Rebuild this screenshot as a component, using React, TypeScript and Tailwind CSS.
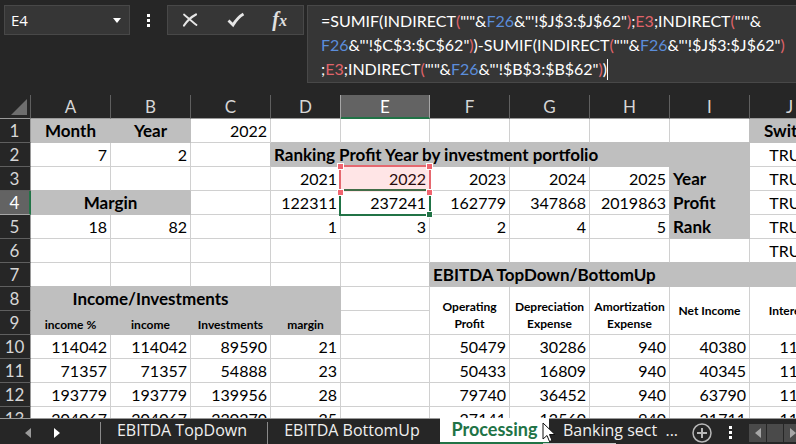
import { Fragment } from "react";

type Cell = {
  text?: string;
  fill?: boolean;
  kind?: "num" | "label" | "title" | "small" | "wrapped" | "center";
  colSpan?: number;
  rowSpan?: number;
  mark?: "ref" | "active";
};

const COLUMNS = ["A", "B", "C", "D", "E", "F", "G", "H", "I", "J"];

const n = (text: string): Cell => ({ text, kind: "num" });
const g = (text: string, kind: Cell["kind"]): Cell => ({ text, kind, fill: true });

const ROWS: Record<string, Cell>[] = [
  { A: g("Month", "title"), B: g("Year", "title"), C: n("2022"), J: g("Switch", "title") },
  {
    A: n("7"), B: n("2"),
    D: { text: "Ranking Profit Year by investment portfolio", kind: "label", fill: true, colSpan: 6 },
    J: { text: "TRUE", kind: "center" },
  },
  {
    D: n("2021"), E: { text: "2022", kind: "num", mark: "ref" }, F: n("2023"), G: n("2024"), H: n("2025"),
    I: g("Year", "label"), J: { text: "TRUE", kind: "center" },
  },
  {
    A: { text: "Margin", kind: "title", fill: true, colSpan: 2 },
    D: n("122311"), E: { text: "237241", kind: "num", mark: "active" }, F: n("162779"), G: n("347868"), H: n("2019863"),
    I: g("Profit", "label"), J: { text: "TRUE", kind: "center" },
  },
  {
    A: n("18"), B: n("82"), D: n("1"), E: n("3"), F: n("2"), G: n("4"), H: n("5"),
    I: g("Rank", "label"), J: { text: "TRUE", kind: "center" },
  },
  { J: { text: "TRUE", kind: "center" } },
  { F: { text: "EBITDA TopDown/BottomUp", kind: "label", fill: true, colSpan: 5 } },
  {
    A: { text: "Income/Investments", kind: "title", fill: true, colSpan: 3 },
    D: { fill: true },
    F: { text: "Operating Profit", kind: "wrapped", rowSpan: 2 },
    G: { text: "Depreciation Expense", kind: "wrapped", rowSpan: 2 },
    H: { text: "Amortization Expense", kind: "wrapped", rowSpan: 2 },
    I: { text: "Net Income", kind: "small", rowSpan: 2 },
    J: { text: "Interest", kind: "small", rowSpan: 2 },
  },
  { A: g("income %", "small"), B: g("income", "small"), C: g("Investments", "small"), D: g("margin", "small") },
  { A: n("114042"), B: n("114042"), C: n("89590"), D: n("21"), F: n("50479"), G: n("30286"), H: n("940"), I: n("40380"), J: n("11640") },
  { A: n("71357"), B: n("71357"), C: n("54888"), D: n("23"), F: n("50433"), G: n("16809"), H: n("940"), I: n("40345"), J: n("11640") },
  { A: n("193779"), B: n("193779"), C: n("139956"), D: n("28"), F: n("79740"), G: n("36452"), H: n("940"), I: n("63790"), J: n("11640") },
  { A: n("204067"), B: n("204067"), C: n("220270"), D: n("25"), F: n("27141"), G: n("12560"), H: n("940"), I: n("21711"), J: n("11640") },
];

// Resolve merged ranges so every address knows which cell owns it.
const owner: (Cell | undefined)[][] = ROWS.map(() => COLUMNS.map(() => undefined));
const covered: boolean[][] = ROWS.map(() => COLUMNS.map(() => false));
ROWS.forEach((row, r) =>
  COLUMNS.forEach((name, c) => {
    const cell = row[name];
    if (!cell) return;
    for (let y = r; y < r + (cell.rowSpan ?? 1); y++)
      for (let x = c; x < c + (cell.colSpan ?? 1); x++) {
        owner[y][x] = cell;
        covered[y][x] = y !== r || x !== c;
      }
  }),
);

const isFilled = (r: number, c: number) => Boolean(owner[r]?.[c]?.fill);

const KIND = {
  num: "pr-[3px] text-right text-base leading-5",
  label: "pl-[3px] text-left text-[17px] leading-5 font-bold",
  title: "text-center text-[17px] leading-5 font-bold",
  small: "text-center text-xs leading-[17px] font-bold",
  wrapped: "pt-2 text-center text-xs leading-[17px] font-bold",
  center: "text-center text-base leading-5",
};

function Handle({ at }: { at: string }) {
  return <span className={`absolute size-[7px] border border-white bg-[#f0646e] ${at}`} />;
}

function Mark({ type }: { type: "ref" | "active" }) {
  if (type === "ref")
    return (
      <span className="pointer-events-none absolute -inset-0.5 z-20 border-2 border-b-0 border-[#e5686f] bg-[#ff505a]/15">
        <Handle at="-left-1 -top-1" />
        <Handle at="-right-1 -top-1" />
        <Handle at="-bottom-1 -left-1" />
        <Handle at="-bottom-1 -right-1" />
      </span>
    );
  return (
    <span className="pointer-events-none absolute -inset-0.5 z-10 border-2 border-[#217346]">
      <span className="absolute -bottom-1 -right-1 size-[7px] border border-white bg-[#217346]" />
    </span>
  );
}

function Sheet() {
  return (
    <table className="w-full min-w-[830px] table-fixed border-separate border-spacing-0 bg-white text-black">
      <colgroup>
        <col className="w-[31px]" />
        <col className="w-[80px]" />
        <col className="w-[80px]" />
        <col className="w-[80px]" />
        <col className="w-[70px]" />
        <col className="w-[89px]" />
        <col className="w-[80px]" />
        <col className="w-[80px]" />
        <col className="w-[80px]" />
        <col className="w-[80px]" />
        <col />
      </colgroup>
      <thead>
        <tr className="h-6 bg-[#262626] text-[#d6d6d6]">
          <td className="border-b border-r border-b-[#9a9a9a] border-r-[#5f5f5f] p-0">
            <button aria-label="Select all" className="ml-[11px] block">
              <svg width="16" height="16" viewBox="0 0 16 16" className="block">
                <path d="M16 0v16H0z" fill="#6e6e6e" />
              </svg>
            </button>
          </td>
          {COLUMNS.map((name) => (
            <th
              key={name}
              scope="col"
              className={
                name === "E"
                  ? "border-b-2 border-r border-b-[#217346] border-r-[#a6a6a6] bg-[#636363] p-0 pt-0.5 text-[17px] leading-5 font-normal text-white"
                  : name === "D"
                    ? "border-b border-r border-b-[#9a9a9a] border-r-[#a6a6a6] p-0 pt-px text-[17px] leading-5 font-normal"
                    : "border-b border-r border-b-[#9a9a9a] border-r-[#5f5f5f] p-0 pt-px text-[17px] leading-5 font-normal"
              }
            >
              {name}
            </th>
          ))}
        </tr>
      </thead>
      <tbody>
        {ROWS.map((_, r) => (
          <tr key={r} className="h-6">
            <th
              scope="row"
              className={
                r === 3
                  ? "border-b border-r-2 border-b-[#a6a6a6] border-r-[#217346] bg-[#636363] p-0 text-[17px] leading-5 font-normal text-white"
                  : "border-b border-r border-b-[#5f5f5f] border-r-[#9a9a9a] bg-[#262626] p-0 pr-px text-[17px] leading-5 font-normal text-[#d6d6d6]"
              }
            >
              {r + 1}
            </th>
            {COLUMNS.map((name, c) => {
              if (covered[r][c]) return <Fragment key={name} />;
              const cell = owner[r][c];
              const lastRow = r + (cell?.rowSpan ?? 1) - 1;
              const lastCol = c + (cell?.colSpan ?? 1) - 1;
              const right = cell?.fill || isFilled(r, lastCol + 1) ? "border-r-[#bfbfbf]" : "border-r-[#d0d0d0]";
              const bottom = cell?.fill || isFilled(lastRow + 1, c) ? "border-b-[#bfbfbf]" : "border-b-[#d0d0d0]";
              const wrap = cell?.kind === "wrapped" ? "whitespace-normal" : "whitespace-nowrap";
              return (
                <td
                  key={name}
                  colSpan={cell?.colSpan}
                  rowSpan={cell?.rowSpan}
                  className={`relative border-b border-r p-0 ${wrap} ${right} ${bottom} ${cell?.fill ? "bg-[#bfbfbf]" : ""} ${cell?.kind ? KIND[cell.kind] : ""} ${cell?.kind === "small" && cell.fill ? "pt-1" : ""}`}
                >
                  {cell?.text}
                  {cell?.mark && <Mark type={cell.mark} />}
                </td>
              );
            })}
          </tr>
        ))}
      </tbody>
    </table>
  );
}

const B = ({ children }: { children: string }) => <span className="text-[#5b8ddb]">{children}</span>;
const R = ({ children }: { children: string }) => <span className="text-[#e0646a]">{children}</span>;

function FormulaBar() {
  return (
    <header className="flex h-[95px] shrink-0 items-start pl-1 pt-[5px]">
      <div className="flex h-[30px] w-[126px] items-center border border-[#484848] bg-[#363636]">
        <input
          aria-label="Name box"
          defaultValue="E4"
          className="w-full min-w-0 flex-1 bg-transparent pl-[6px] font-['Open_Sans',sans-serif] text-[15px] text-white outline-none"
        />
        <button aria-label="Open name list" className="pr-2">
          <svg width="8" height="5" viewBox="0 0 8 5" className="block">
            <path d="M0 0h8L4 5z" fill="#fff" />
          </svg>
        </button>
      </div>
      <div className="flex h-[30px] w-[37px] flex-col items-center justify-center gap-[2px]">
        <span className="size-[3px] bg-white" />
        <span className="size-[3px] bg-white" />
        <span className="size-[3px] bg-white" />
      </div>
      <div className="flex h-[30px] w-[137px] items-center justify-between border border-[#484848] bg-[#363636] pl-[13px] pr-4">
        <button aria-label="Cancel">
          <svg width="18" height="16" viewBox="0 0 18 16" className="block" fill="none" stroke="#e6e6e6" strokeLinecap="round">
            <path d="M3 2.500C6 5 11 9.500 15.500 13" strokeWidth="1.800" />
            <path d="M15 2.500C10 5 6 9 3 13.500" strokeWidth="2.200" />
          </svg>
        </button>
        <button aria-label="Enter">
          <svg width="18" height="16" viewBox="0 0 18 16" className="block" fill="none" stroke="#e6e6e6">
            <path d="M1.500 8.500L6 13C9 8 12 4.500 16.500 2" strokeWidth="2.800" />
          </svg>
        </button>
        <button
          aria-label="Insert function"
          className="font-['Liberation_Serif',serif] text-xl leading-6 font-bold italic text-[#e0e0e0]"
        >
          f<span className="text-base">x</span>
        </button>
      </div>
      <div
        role="textbox"
        aria-label="Formula"
        aria-multiline="true"
        tabIndex={0}
        className="ml-[3px] h-[78px] flex-1 overflow-hidden whitespace-nowrap border border-r-0 border-[#484848] bg-[#363636] pl-[13px] pt-[3px] text-base leading-6 text-white outline-none"
      >
        <div>
          =SUMIF(INDIRECT<R>(</R>"'"&amp;<B>F26</B>&amp;"'!$J$3:$J$62"<R>)</R>;<R>E3</R>;INDIRECT<R>(</R>"'"&amp;
        </div>
        <div>
          <B>F26</B>&amp;"'!$C$3:$C$62"<R>)</R>)-SUMIF(INDIRECT<R>(</R>"'"&amp;<B>F26</B>&amp;"'!$J$3:$J$62"<R>)</R>
        </div>
        <div className="flex items-center">
          ;<R>E3</R>;INDIRECT<R>(</R>"'"&amp;<B>F26</B>&amp;"'!$B$3:$B$62"<R>)</R>)
          <span className="h-[21px] w-px bg-white" />
        </div>
      </div>
    </header>
  );
}

function Arrow({ left, color }: { left?: boolean; color: string }) {
  return (
    <svg width="6" height="10" viewBox="0 0 6 10" className="block">
      <path d={left ? "M6 0v10L0 5z" : "M0 0v10l6-5z"} fill={color} />
    </svg>
  );
}

function TabBar() {
  return (
    <nav
      aria-label="Sheets"
      className="relative flex h-[26px] shrink-0 items-stretch border-t border-[#9a9a9a] bg-[#262626] font-['Open_Sans',sans-serif] text-base leading-5 text-[#f0f0f0]"
    >
      <div className="flex w-[100px] items-center gap-[23px] pl-[25px] pt-[3px]">
        <button aria-label="Previous sheet"><Arrow left color="#9a9a9a" /></button>
        <button aria-label="Next sheet"><Arrow color="#ffffff" /></button>
      </div>
      <span className="mt-[3px] w-px bg-[#8a8a8a]" />
      <button className="w-[166px] pb-1 pr-1">EBITDA TopDown</button>
      <span className="mt-[3px] w-px bg-[#8a8a8a]" />
      <button className="w-[172px] pb-1 pr-1">EBITDA BottomUp</button>
      <button
        aria-current="page"
        className="-mt-px w-[109px] border-b-2 border-[#217346] bg-white pb-0.5 font-['Lato',sans-serif] text-lg leading-5 font-bold text-[#217346]"
      >
        Processing
      </button>
      <button className="flex-1 whitespace-nowrap pb-1 pl-[14px] text-left">Banking sect&nbsp; ...</button>
      <div className="flex items-center pt-[2px]">
        <button aria-label="New sheet">
          <svg width="20" height="20" viewBox="0 0 20 20" className="block" fill="none" stroke="#b8b8b8" strokeWidth="1.500">
            <circle cx="10" cy="10" r="9" />
            <path d="M10 5v10M5 10h10" strokeWidth="2" />
          </svg>
        </button>
        <div className="flex w-[37px] flex-col items-center gap-[2px]">
          <span className="size-[3px] bg-white" />
          <span className="size-[3px] bg-white" />
          <span className="size-[3px] bg-white" />
        </div>
        <div className="flex h-[18px] gap-px">
          <button aria-label="Scroll left" className="flex w-[17px] items-center justify-center bg-[#4a4a4a]">
            <Arrow left color="#a6a6a6" />
          </button>
          <span className="w-4 bg-[#4a4a4a]" />
          <button aria-label="Scroll right" className="flex w-3 items-center justify-end bg-[#4a4a4a]">
            <Arrow color="#a6a6a6" />
          </button>
        </div>
      </div>
      <span className="pointer-events-none absolute bottom-0 left-[543px] h-px w-[73px] bg-[#c8c8c8]" />
      <svg width="14" height="21" viewBox="0 0 14 21" className="pointer-events-none absolute left-[542px] top-[3px]">
        <path d="M1 1v16l4-3.500 2.500 6 2.500-1-2.500-6H13z" fill="#fff" stroke="#111" />
      </svg>
    </nav>
  );
}

export default function App() {
  return (
    <div className="flex h-screen flex-col overflow-hidden bg-[#262626] font-['Lato','Liberation_Sans',sans-serif]">
      <FormulaBar />
      <main className="min-h-0 flex-1 overflow-hidden">
        <Sheet />
      </main>
      <TabBar />
    </div>
  );
}
